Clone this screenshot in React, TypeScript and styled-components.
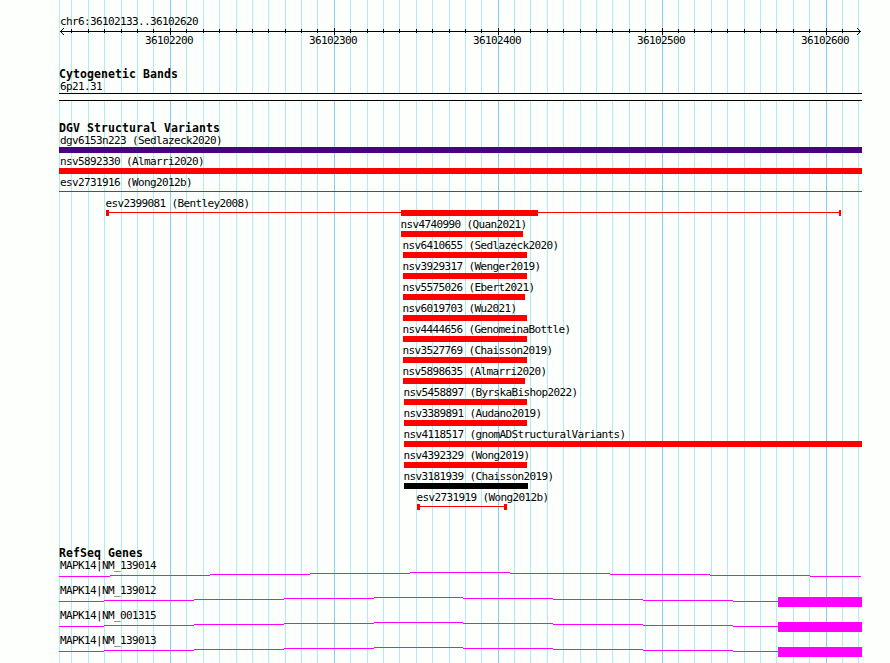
import styled, { createGlobalStyle } from "styled-components";

const LEFT = 59;
const RIGHT = 862;

const MAJOR = [170, 334, 498, 662, 826];
const MINOR = [
  71, 88, 104, 121, 137, 153, 186, 203, 219, 236, 252, 268, 285, 301, 317, 350,
  367, 383, 399, 416, 432, 449, 465, 481, 514, 530, 547, 563, 580, 596, 612,
  629, 645, 678, 694, 711, 727, 744, 760, 776, 793, 809, 842, 858,
];

type Part = { width: number; kind: "bar" | "line" };
type Variant = { name: string; start: number; parts: Part[]; color?: string };

const bar = (width: number): Part => ({ width, kind: "bar" });
const line = (width: number): Part => ({ width, kind: "line" });

const variants: Variant[] = [
  { name: "dgv6153n223 (Sedlazeck2020)", start: 59, parts: [bar(803)], color: "#4b0082" },
  { name: "nsv5892330 (Almarri2020)", start: 59, parts: [bar(803)] },
  { name: "esv2731916 (Wong2012b)", start: 59, parts: [line(803)], color: "#e8101c" },
  {
    name: "esv2399081 (Bentley2008)",
    start: 106,
    parts: [bar(3), line(292), bar(137), line(301), bar(2)],
  },
  { name: "nsv4740990 (Quan2021)", start: 401, parts: [bar(122)] },
  { name: "nsv6410655 (Sedlazeck2020)", start: 403, parts: [bar(124)] },
  { name: "nsv3929317 (Wenger2019)", start: 403, parts: [bar(124)] },
  { name: "nsv5575026 (Ebert2021)", start: 403, parts: [bar(122)] },
  { name: "nsv6019703 (Wu2021)", start: 403, parts: [bar(124)] },
  { name: "nsv4444656 (GenomeinaBottle)", start: 403, parts: [bar(124)] },
  { name: "nsv3527769 (Chaisson2019)", start: 403, parts: [bar(124)] },
  { name: "nsv5898635 (Almarri2020)", start: 403, parts: [bar(122)] },
  { name: "nsv5458897 (ByrskaBishop2022)", start: 404, parts: [bar(123)] },
  { name: "nsv3389891 (Audano2019)", start: 404, parts: [bar(123)] },
  { name: "nsv4118517 (gnomADStructuralVariants)", start: 404, parts: [bar(458)] },
  { name: "nsv4392329 (Wong2019)", start: 404, parts: [bar(123)] },
  { name: "nsv3181939 (Chaisson2019)", start: 404, parts: [bar(124)], color: "#000" },
  { name: "esv2731919 (Wong2012b)", start: 417, parts: [bar(3), line(84), bar(3)] },
];

// x positions at which an intron line steps up to its peak and back down
const longIntron = [59, 110, 210, 310, 410, 510, 610, 710, 810, 861];
const shortIntron = [59, 104, 194, 284, 374, 463, 553, 643, 733, 778];

const genes = [
  { name: "MAPK14|NM_139014", steps: longIntron, exon: false },
  { name: "MAPK14|NM_139012", steps: shortIntron, exon: true },
  { name: "MAPK14|NM_001315", steps: shortIntron, exon: true },
  { name: "MAPK14|NM_139013", steps: shortIntron, exon: true },
];

function GridLines() {
  return (
    <StyledGrid width="890" height="663" shapeRendering="crispEdges">
      {[LEFT, ...MINOR].map((x) => (
        <rect key={x} x={x} y="0" width="1" height="663" fill="#afeeee" />
      ))}
      {MAJOR.map((x) => (
        <rect key={x} x={x} y="0" width="1" height="663" fill="#87ceeb" />
      ))}
    </StyledGrid>
  );
}

function Ruler() {
  return (
    <StyledRuler>
      <Label $x={60}>chr6:36102133..36102620</Label>
      <StyledAxis width="890" height="7" shapeRendering="crispEdges">
        <rect x="60" y="3" width="801" height="1" />
        {MINOR.filter((x) => x < 858).map((x) => (
          <rect key={x} x={x} y="1" width="1" height="4" />
        ))}
        {MAJOR.map((x) => (
          <rect key={x} x={x} y="0" width="1" height="7" />
        ))}
        {[1, 2, 3].map((d) => (
          <g key={d}>
            <rect x={60 + d} y={3 - d} width="1" height="1" />
            <rect x={60 + d} y={3 + d} width="1" height="1" />
            <rect x={860 - d} y={3 - d} width="1" height="1" />
            <rect x={860 - d} y={3 + d} width="1" height="1" />
          </g>
        ))}
      </StyledAxis>
      <StyledTicks>
        {MAJOR.map((x, index) => (
          <Label key={x} $x={0}>
            {36102200 + index * 100}
          </Label>
        ))}
      </StyledTicks>
    </StyledRuler>
  );
}

function Intron({ steps, exon }: { steps: number[]; exon: boolean }) {
  return (
    <StyledGlyph width="890" height="12" shapeRendering="crispEdges">
      {steps.slice(0, -1).map((x, index) => (
        <rect
          key={x}
          x={x}
          y={Math.abs(index - 4)}
          width={steps[index + 1] - x}
          height="1"
        />
      ))}
      {exon && <rect x="778" y="0" width={RIGHT - 778} height="10" />}
    </StyledGlyph>
  );
}

function App() {
  return (
    <StyledPage>
      <GlobalStyle />
      <GridLines />
      <StyledContent>
        <Ruler />
        <StyledTrack $gap={20}>
          <Title>Cytogenetic Bands</Title>
          <Label $x={60}>6p21.31</Label>
          <StyledBand />
        </StyledTrack>
        <StyledTrack $gap={20}>
          <Title>DGV Structural Variants</Title>
          {variants.map(({ name, start, parts, color }) => (
            <StyledVariant key={name}>
              <Label $x={Math.max(60, start - 0.5)}>{name}</Label>
              <StyledFeature $start={start}>
                {parts.map((part, index) => (
                  <StyledPart
                    key={index}
                    $width={part.width}
                    $kind={part.kind}
                    $color={color ?? "#f00"}
                  />
                ))}
              </StyledFeature>
            </StyledVariant>
          ))}
        </StyledTrack>
        <StyledTrack $gap={34}>
          <Title>RefSeq Genes</Title>
          {genes.map(({ name, steps, exon }) => (
            <StyledGene key={name}>
              <Label $x={60}>{name}</Label>
              <Intron steps={steps} exon={exon} />
            </StyledGene>
          ))}
        </StyledTrack>
      </StyledContent>
    </StyledPage>
  );
}

export default App;

const GlobalStyle = createGlobalStyle`
  body {
    margin: 0;
    background: #fdfffc;
    overflow: hidden;
  }
`;

const StyledPage = styled.div`
  position: relative;
  width: 890px;
  height: 663px;
  overflow: hidden;
  background: #fdfffc;
  color: #000;
  font-family: "DejaVu Sans Mono", "Liberation Mono", monospace;
`;

const StyledGrid = styled.svg`
  position: absolute;
  top: 0;
  left: 0;
`;

const StyledContent = styled.main`
  position: relative;
  display: flex;
  flex-direction: column;
`;

const StyledRuler = styled.header`
  display: flex;
  flex-direction: column;
  padding-top: 15px;
`;

const StyledAxis = styled.svg`
  display: block;
`;

const StyledTicks = styled.div`
  display: flex;
  gap: 116px;
  margin-left: 145px;
  margin-top: -1px;
`;

const StyledTrack = styled.section<{ $gap: number }>`
  display: flex;
  flex-direction: column;
  margin-top: ${({ $gap }) => $gap}px;
`;

const Title = styled.h2`
  height: 13px;
  margin: 0 0 0 ${LEFT}px;
  font-size: 11.5px;
  font-weight: bold;
  line-height: 15px;
  letter-spacing: 0.076px;
  white-space: pre;
`;

const Label = styled.span<{ $x: number }>`
  flex: none;
  height: 13px;
  margin-left: ${({ $x }) => $x}px;
  font-size: 11px;
  line-height: 13px;
  letter-spacing: -0.623px;
  white-space: pre;
`;

const StyledBand = styled.div`
  box-sizing: border-box;
  width: ${RIGHT - LEFT}px;
  height: 8px;
  margin-left: ${LEFT}px;
  background: #fdfffc;
  border: solid #000;
  border-width: 1px 0;
`;

const StyledVariant = styled.div`
  display: flex;
  flex-direction: column;
  height: 21px;
`;

const StyledFeature = styled.div<{ $start: number }>`
  display: flex;
  margin-left: ${({ $start }) => $start}px;
`;

const StyledPart = styled.div<{
  $width: number;
  $kind: Part["kind"];
  $color: string;
}>`
  width: ${({ $width }) => $width}px;
  height: ${({ $kind }) => ($kind === "bar" ? 6 : 1)}px;
  margin-top: ${({ $kind }) => ($kind === "bar" ? 0 : 2)}px;
  background: ${({ $color }) => $color};
`;

const StyledGene = styled.div`
  display: flex;
  flex-direction: column;
  height: 25px;
`;

const StyledGlyph = styled.svg`
  display: block;
  fill: #f0f;
`;
